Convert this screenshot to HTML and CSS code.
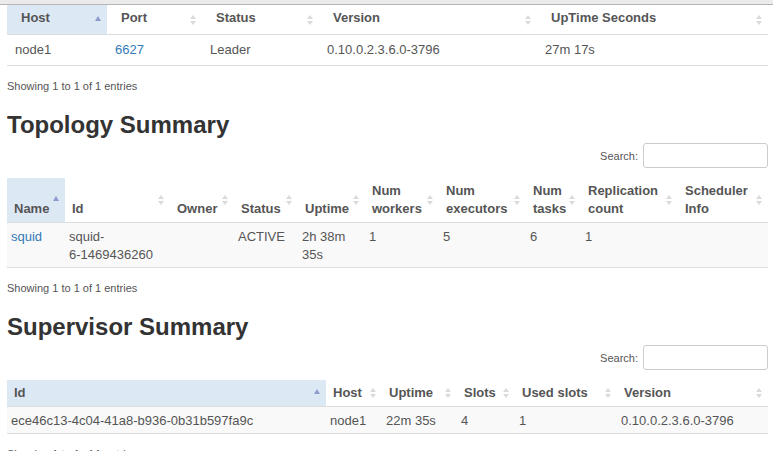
FILE: index.html
```html
<!DOCTYPE html>
<html lang="en">
<head>
    <meta charset="UTF-8">
    <meta name="viewport" content="width=device-width, initial-scale=1.0">
    <title>Storm UI</title>
    <link rel="stylesheet" href="styles.css">
</head>
<body>
    <div class="top-strip"></div>
    <div class="page">
        <table class="data-table nimbus">
            <colgroup>
                <col class="w-100"><col class="w-95"><col class="w-117"><col class="w-218"><col class="w-231">
            </colgroup>
            <thead>
                <tr>
                    <th class="sort-asc">Host</th>
                    <th class="sortable">Port</th>
                    <th class="sortable">Status</th>
                    <th class="sortable">Version</th>
                    <th class="sortable">UpTime Seconds</th>
                </tr>
            </thead>
            <tbody>
                <tr>
                    <td>node1</td>
                    <td><a href="#">6627</a></td>
                    <td>Leader</td>
                    <td>0.10.0.2.3.6.0-3796</td>
                    <td>27m 17s</td>
                </tr>
            </tbody>
        </table>
        <div class="info">Showing 1 to 1 of 1 entries</div>

        <h2>Topology Summary</h2>
        <div class="search">
            <label for="topo-search">Search:</label>
            <input type="search" id="topo-search">
        </div>
        <table class="data-table condensed striped">
            <colgroup>
                <col class="w-58"><col class="w-105"><col class="w-64"><col class="w-64"><col class="w-67">
                <col class="w-74"><col class="w-87"><col class="w-55"><col class="w-97"><col class="w-90">
            </colgroup>
            <thead>
                <tr>
                    <th class="sort-asc">Name</th>
                    <th class="sortable">Id</th>
                    <th class="sortable">Owner</th>
                    <th class="sortable">Status</th>
                    <th class="sortable">Uptime</th>
                    <th class="sortable">Num workers</th>
                    <th class="sortable">Num executors</th>
                    <th class="sortable">Num tasks</th>
                    <th class="sortable">Replication count</th>
                    <th class="sortable">Scheduler Info</th>
                </tr>
            </thead>
            <tbody>
                <tr>
                    <td><a href="#">squid</a></td>
                    <td>squid- <span class="nowrap">6-1469436260</span></td>
                    <td></td>
                    <td>ACTIVE</td>
                    <td>2h 38m 35s</td>
                    <td>1</td>
                    <td>5</td>
                    <td>6</td>
                    <td>1</td>
                    <td></td>
                </tr>
            </tbody>
        </table>
        <div class="info">Showing 1 to 1 of 1 entries</div>

        <h2>Supervisor Summary</h2>
        <div class="search">
            <label for="sup-search">Search:</label>
            <input type="search" id="sup-search">
        </div>
        <table class="data-table condensed striped">
            <colgroup>
                <col class="w-319"><col class="w-56"><col class="w-75"><col class="w-58"><col class="w-102"><col class="w-151">
            </colgroup>
            <thead>
                <tr>
                    <th class="sort-asc">Id</th>
                    <th class="sortable">Host</th>
                    <th class="sortable">Uptime</th>
                    <th class="sortable">Slots</th>
                    <th class="sortable">Used slots</th>
                    <th class="sortable">Version</th>
                </tr>
            </thead>
            <tbody>
                <tr>
                    <td>ece46c13-4c04-41a8-b936-0b31b597fa9c</td>
                    <td>node1</td>
                    <td>22m 35s</td>
                    <td>4</td>
                    <td>1</td>
                    <td>0.10.0.2.3.6.0-3796</td>
                </tr>
            </tbody>
        </table>
        <div class="info">Showing 1 to 1 of 1 entries</div>
    </div>
</body>
</html>
```

FILE: styles.css
```css
body {
    font-family: "Liberation Sans", Arial, sans-serif;
    font-size: 13px;
    color: #555;
    background-color: #fff;
    margin: 0;
}
a {
    color: #337ab7;
    text-decoration: none;
}
.nowrap {
    white-space: nowrap;
}
.top-strip {
    height: 4px;
    background-color: #ebebeb;
    border-bottom: 1px solid #b5b5b5;
}
.page {
    padding: 0 5px 0 7px;
}
h2 {
    font-size: 24px;
    line-height: 26px;
    font-weight: bold;
    color: #333;
    margin: 18px 0 0 0;
}
.info {
    font-size: 11px;
    line-height: 16px;
    margin-top: 12px;
}
.search {
    display: flex;
    justify-content: flex-end;
    align-items: center;
    gap: 5px;
    margin-top: 5px;
    font-size: 11px;
}
.search input {
    width: 125px;
    height: 25px;
    box-sizing: border-box;
    border: 1px solid #ccc;
    border-radius: 3px;
    padding: 2px 5px;
    margin: 0;
    font: inherit;
}
.data-table {
    width: 100%;
    table-layout: fixed;
    border-collapse: collapse;
    border-spacing: 0;
}
.search + .data-table {
    margin-top: 10px;
}
.data-table th {
    position: relative;
    text-align: left;
    vertical-align: bottom;
    font-weight: bold;
    color: #555;
    line-height: 17px;
    padding: 4px 18px 8px 14px;
    border-bottom: 1px solid #ddd;
}
.data-table td {
    vertical-align: top;
    line-height: 18px;
    padding: 6px 8px;
    border-bottom: 1px solid #ddd;
}
.data-table.condensed th {
    line-height: 18px;
    padding: 4px 18px 4px 7px;
}
.data-table.condensed td {
    padding: 5px 4px 3px 4px;
}
.data-table.striped tbody tr:nth-child(odd) {
    background-color: #f9f9f9;
}
.data-table th.sort-asc {
    background-color: #dde8f5;
}

/* sort arrows */
.sortable::before,
.sortable::after,
.sort-asc::before {
    content: "";
    position: absolute;
    right: 6px;
    top: 50%;
    border-left: 3px solid transparent;
    border-right: 3px solid transparent;
}
.sortable::before {
    margin-top: -5px;
    border-bottom: 4px solid #dadada;
}
.sortable::after {
    margin-top: 1px;
    border-top: 4px solid #dadada;
}
.sort-asc::before {
    margin-top: -4px;
    border-bottom: 5px solid #8e9bcf;
}

/* column widths */
.w-55 { width: 55px; }
.w-56 { width: 56px; }
.w-58 { width: 58px; }
.w-64 { width: 64px; }
.w-67 { width: 67px; }
.w-74 { width: 74px; }
.w-75 { width: 75px; }
.w-87 { width: 87px; }
.w-90 { width: 90px; }
.w-95 { width: 95px; }
.w-97 { width: 97px; }
.w-100 { width: 100px; }
.w-102 { width: 102px; }
.w-105 { width: 105px; }
.w-117 { width: 117px; }
.w-151 { width: 151px; }
.w-218 { width: 218px; }
.w-231 { width: 231px; }
.w-319 { width: 319px; }
```
